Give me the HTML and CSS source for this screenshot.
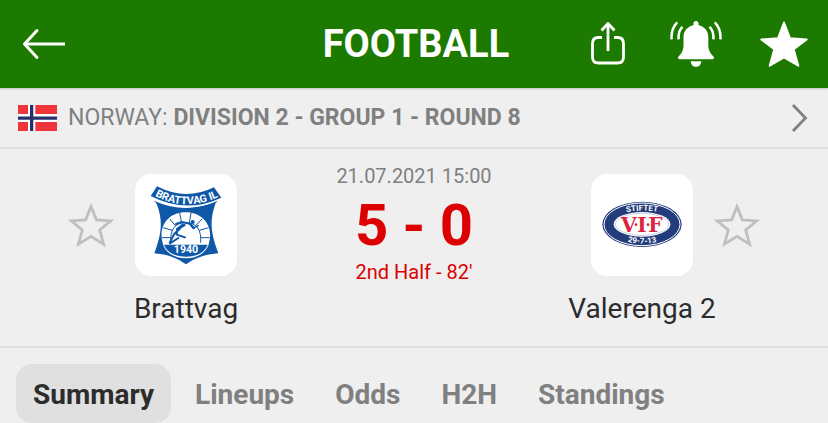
FILE: index.html
```html
<!DOCTYPE html>
<html lang="en">
<head>
<meta charset="utf-8">
<meta name="viewport" content="width=device-width, initial-scale=1">
<title>Football</title>
<link rel="stylesheet" href="styles.css">
</head>
<body>
<header class="topbar">
  <button class="icon-button back" type="button" aria-label="Back">
    <svg width="44" height="32" viewBox="0 0 44 32" fill="none" stroke="#fff" stroke-width="3" stroke-linejoin="round"><path d="M3 16h40"/><path d="M15 2.500 2.500 16 15 29.500" stroke-linecap="round"/></svg>
  </button>
  <h1 class="title">FOOTBALL</h1>
  <div class="actions">
    <button class="icon-button" type="button" aria-label="Share">
      <svg width="52" height="52" viewBox="0 0 52 52" fill="none" stroke="#fff" stroke-width="2.800" stroke-linejoin="round"><path d="M20 19.500h-3.500q-6 0-6 6V39q0 6 6 6h19q6 0 6-6V25.500q0-6-6-6H32M26 6v27"/><path d="m19.500 12.500 6.500-7 6.500 7"/></svg>
    </button>
    <button class="icon-button" type="button" aria-label="Notifications">
      <svg width="52" height="52" viewBox="0 0 52 52" fill="#fff"><path d="M26 3c1.500 0 2.500 1 2.500 2.800v1.400C34.500 8.400 38.300 13 38.300 19v7.500c0 5.500 1.700 8.800 5.200 12 1.100 1.200.4 2.700-1.200 2.700H9.700c-1.600 0-2.300-1.500-1.200-2.700 3.500-3.200 5-6.500 5-12V19c0-6 4-10.600 10-11.800V5.800C23.500 4 24.500 3 26 3ZM20.800 43.200h10.400c0 3.300-2.200 5.600-5.200 5.600s-5.200-2.300-5.200-5.600Z"/><path d="M12.500 8.800Q8 13 8.600 21.300M7.200 4.300Q.8 11 1.600 21.300M39.500 8.800q4.500 4.200 3.900 12.500M44.800 4.300q6.400 6.700 5.600 17" fill="none" stroke="#fff" stroke-width="2.500"/></svg>
    </button>
    <button class="icon-button" type="button" aria-label="Favourite match">
      <svg width="52" height="52" viewBox="0 0 52 52" fill="#fff" stroke="#fff" stroke-width="2" stroke-linejoin="round"><path d="m26 4.500 6 15.800 16.700 1.200-13 9.800 4.600 16.400L26 39.500l-14.300 8.200 4.600-16.400-13-9.800L20 20.300Z"/></svg>
    </button>
  </div>
</header>

<main>
  <a class="league" href="#league">
    <svg class="flag" width="39" height="26" viewBox="0 0 39 26" role="img" aria-label="Norway"><path fill="#f0343b" d="M0 0h39v26H0z"/><path fill="#fff" d="M10 0h7.300v26H10zM0 9h39v8H0z"/><path fill="#28306c" d="M12 0h3.300v26H12zM0 11.400h39v3.300H0z"/></svg>
    <span class="league-name">NORWAY: <strong>DIVISION 2 - GROUP 1 - ROUND 8</strong></span>
    <svg width="18" height="30" viewBox="0 0 18 30" fill="none" stroke="#808080" stroke-width="2.800"><path d="m3 2 12.500 13L3 28"/></svg>
  </a>

  <section class="match">
    <div class="team home">
      <button class="icon-button star" type="button" aria-label="Favourite Brattvag">
        <svg width="46" height="46" viewBox="0 0 46 46" fill="none" stroke="#bfbfbf" stroke-width="2.800" stroke-linejoin="miter"><path d="m23 4.500 5.400 13.300 14.400 1.100-11.100 9 3.900 14.200L23 34.400l-12.600 7.700 3.900-14.200-11.100-9 14.400-1.100Z"/></svg>
      </button>
      <svg class="crest" width="102" height="102" viewBox="15 12 306 306" role="img" aria-label="Brattvag crest">
        <defs><path id="banner" d="M72 76Q168 128 268 79"/></defs>
        <path fill="#0f58a8" d="M72 92q96 44 193-1l-8 8c-20 55-14 92 8 151-36 3-66 11-97 33-32-22-58-30-95-33 20-55 28-94 7-149Z"/>
        <path fill="#0f58a8" d="M81 49q86 45 171 3l22 31q-105 50-212-5Z"/>
        <path fill="none" stroke="#fff" stroke-width="3" d="M65 84q104 52 207 3"/>
        <text class="crest-banner"><textPath href="#banner" startOffset="50%">BRATTVAG IL</textPath></text>
        <path fill="#fff" d="M98 219c-14-48 15-92 69-92s84 44 70 92c-6 28-34 46-69 46s-64-18-70-46Z"/>
        <path fill="#0f58a8" d="M102 224h131c-8 23-33 36-65 36s-58-13-66-36Z"/>
        <g fill="none" stroke="#0f58a8" stroke-width="3"><path d="M123 218c-4-38 11-60 44-60s48 22 45 60M149 129l6 30M183 129l-5 30M119 147l18 21M216 147l-20 21M99 173l28 8M236 173l-28 8M96 203h27M239 203h-27"/></g>
        <g fill="none" stroke="#0f58a8" stroke-linecap="round" stroke-linejoin="round"><path stroke-width="6" d="m138 162 18-6 24 5 12 13M164 165l-22 12-2 17 25 8M150 176l-17 15-14 27M145 204l-25 16"/><path stroke-width="9" d="m159 165-17 13"/><path stroke-width="4" d="m179 162 10 13 16-8"/></g>
        <circle cx="188" cy="156" r="6" fill="#0f58a8"/>
        <text class="crest-year" x="168" y="250">1940</text>
      </svg>
      <h2 class="team-name">Brattvag</h2>
    </div>

    <div class="score">
      <time class="kickoff" datetime="2021-07-21T15:00">21.07.2021 15:00</time>
      <strong class="goals">5 - 0</strong>
      <span class="status">2nd Half - 82'</span>
    </div>

    <div class="team away">
      <svg class="crest" width="102" height="102" viewBox="15 12 306 306" role="img" aria-label="Valerenga crest">
        <defs><path id="upper" d="M84 142Q110 123 168 122T252 142"/><path id="lower" d="M84 196Q116 220 168 221T252 196"/></defs>
        <ellipse cx="168" cy="163" rx="119" ry="68" fill="#233d7c"/>
        <ellipse cx="168" cy="163" rx="114" ry="64" fill="none" stroke="#fff" stroke-width="3"/>
        <ellipse cx="168" cy="163" rx="85" ry="37" fill="#fff"/>
        <ellipse cx="168" cy="163" rx="80" ry="33" fill="none" stroke="#a9b6d1" stroke-width="2"/>
        <text class="crest-ring"><textPath href="#upper" startOffset="50%">STIFTET</textPath></text>
        <text class="crest-ring"><textPath href="#lower" startOffset="50%">29-7-13</textPath></text>
        <text class="crest-initials" y="185"><tspan x="128">V</tspan><tspan x="168">I</tspan><tspan x="208">F</tspan></text>
        <circle cx="150" cy="164" r="4" fill="#dc2440"/>
        <circle cx="186" cy="164" r="4" fill="#dc2440"/>
      </svg>
      <button class="icon-button star" type="button" aria-label="Favourite Valerenga 2">
        <svg width="46" height="46" viewBox="0 0 46 46" fill="none" stroke="#bfbfbf" stroke-width="2.800" stroke-linejoin="miter"><path d="m23 4.500 5.400 13.300 14.400 1.100-11.100 9 3.900 14.200L23 34.400l-12.600 7.700 3.900-14.200-11.100-9 14.400-1.100Z"/></svg>
      </button>
      <h2 class="team-name">Valerenga 2</h2>
    </div>
  </section>

  <nav class="tabs" aria-label="Match sections">
    <a class="tab active" href="#summary" aria-current="page">Summary</a>
    <a class="tab" href="#lineups">Lineups</a>
    <a class="tab" href="#odds">Odds</a>
    <a class="tab" href="#h2h">H2H</a>
    <a class="tab" href="#standings">Standings</a>
  </nav>
</main>
</body>
</html>
```
FILE: styles.css
```css
* {
  box-sizing: border-box;
}

body {
  margin: 0;
  background: #efefef;
  color: #2c2c2c;
  font-family: Roboto, "Liberation Sans", sans-serif;
}

h1,
h2 {
  margin: 0;
}

a {
  color: inherit;
  text-decoration: none;
}

svg {
  display: block;
}

.icon-button {
  padding: 0;
  border: 0;
  background: none;
  cursor: pointer;
}

.topbar {
  display: grid;
  grid-template-columns: 1fr auto 1fr;
  align-items: center;
  padding: 18px 18px 18px 22px;
  background: #1d7a00;
  color: #fff;
  box-shadow: 0 1px 2px #00000033;
}

.back {
  justify-self: start;
}

.title {
  font-size: 38px;
  line-height: 44px;
  font-weight: 700;
}

.actions {
  display: flex;
  justify-content: flex-end;
  gap: 36px;
}

.league {
  display: flex;
  align-items: center;
  gap: 11px;
  padding: 14px 20px 13px 18px;
  border-bottom: 2px solid #e0e0e0;
  color: #808080;
  font-size: 23px;
  line-height: 32px;
}

.league-name {
  flex: 1;
}

.match {
  display: grid;
  grid-template-columns: 1fr 220px 1fr;
  padding: 15px 68px 19px;
  border-bottom: 2px solid #e0e0e0;
}

.team {
  display: grid;
  grid-template-columns: 46px 102px 46px;
  justify-content: center;
  align-items: center;
  gap: 15px 21px;
  padding-top: 10px;
}

.crest {
  grid-column: 2;
  border-radius: 16px;
  background: #fff;
}

.team-name {
  grid-column: 1 / -1;
  justify-self: center;
  font-size: 28px;
  line-height: 36px;
  font-weight: 400;
  white-space: nowrap;
}

.crest text {
  fill: #fff;
  font-weight: 700;
  text-anchor: middle;
}

.crest .crest-banner,
.crest .crest-year {
  font-size: 32px;
}

.crest .crest-ring {
  font-size: 24px;
}

.crest .crest-initials {
  fill: #dc2440;
  font-family: "DejaVu Serif", serif;
  font-size: 60px;
}

.score {
  display: flex;
  flex-direction: column;
  align-items: center;
}

.kickoff {
  color: #808080;
  font-size: 20px;
  line-height: 24px;
}

.goals {
  margin: 7px 0 5px;
  color: #dc0000;
  font-size: 58px;
  line-height: 60px;
}

.status {
  color: #dc0000;
  font-size: 20px;
  line-height: 24px;
}

.tabs {
  display: flex;
  padding: 16px 16px 0;
  gap: 7px;
}

.tab {
  padding: 13px 17px 10px;
  border-radius: 16px;
  color: #808080;
  font-size: 28px;
  line-height: 36px;
  font-weight: 700;
}

.tab.active {
  background: #e0e0e0;
  color: #2c2c2c;
}
```
